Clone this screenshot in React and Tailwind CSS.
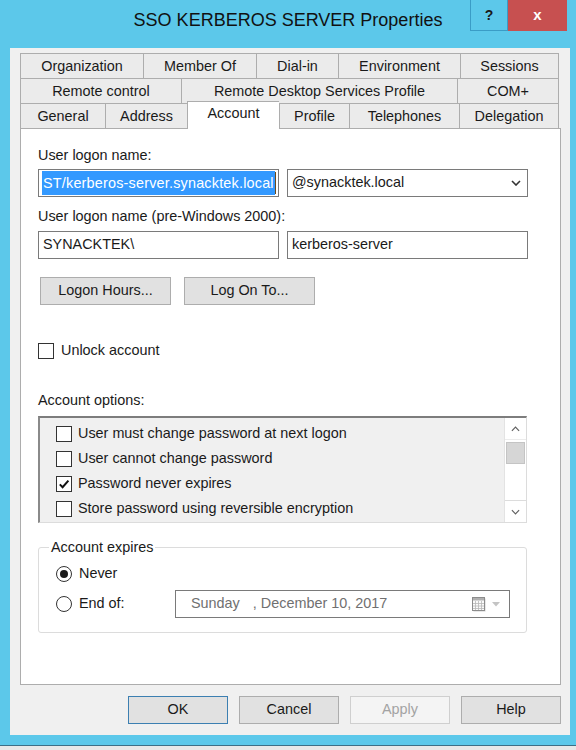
import React from 'react';

// Вкладки: [подпись, ширина, выбрана]
const tabRows = [
  [['Organization', 123], ['Member Of', 113], ['Dial-in', 82], ['Environment', 122], ['Sessions', 99]],
  [['Remote control', 161], ['Remote Desktop Services Profile', 276], ['COM+', 102]],
  [['General', 85], ['Address', 82], ['Account', 92, true], ['Profile', 70], ['Telephones', 110], ['Delegation', 100]],
];

const options = [
  ['User must change password at next logon', false],
  ['User cannot change password', false],
  ['Password never expires', true],
  ['Store password using reversible encryption', false],
];

const CheckBox = ({ checked }) => (
  <div className="w-4 h-4 shrink-0 border border-[#333333] bg-white flex items-center justify-center">
    {checked && (
      <svg width="12" height="12" viewBox="0 0 12 12">
        <path d="M1.8 6.4 L4.6 9.2 L10.4 2.6" fill="none" stroke="#111" strokeWidth="2" />
      </svg>
    )}
  </div>
);

const Radio = ({ checked }) => (
  <div className="w-4 h-4 shrink-0 rounded-full border border-[#333333] bg-white flex items-center justify-center">
    {checked && <div className="w-2 h-2 rounded-full bg-[#1a1a1a]" />}
  </div>
);

const Chevron = ({ up, color = '#333', width = 10, height = 6, sw = 1.6 }) => (
  <svg width={width} height={height} viewBox="0 0 10 6">
    <polyline
      points={up ? '1,5 5,1 9,5' : '1,1 5,5 9,1'}
      fill="none"
      stroke={color}
      strokeWidth={sw}
    />
  </svg>
);

const CalendarIcon = () => (
  <svg width="15" height="15" viewBox="0 0 15 15">
    <rect x="1.5" y="1.5" width="12" height="13" fill="#7a7a7a" opacity="0.35" />
    <rect x="0.5" y="0.5" width="12" height="13" fill="#fafafa" stroke="#8c8c8c" />
    <rect x="1" y="1" width="11" height="2.5" fill="#b0b0b0" />
    <path d="M1 6.5 H12 M1 9 H12 M1 11.5 H12 M3.5 4 V13 M6.5 4 V13 M9.5 4 V13" stroke="#b8b8b8" strokeWidth="0.8" />
  </svg>
);

const Tab = ({ label, width, selected, last }) => (
  <div
    style={{ width }}
    className={`flex items-center justify-center border-t border-l border-[#adadad] ${last ? 'border-r' : ''} ${
      selected ? 'relative z-10 -mt-[2px] -mb-px h-[28px] bg-white pb-[3px]' : 'h-[25px] bg-[#ebebeb] pt-[2px]'
    }`}
  >
    {label}
  </div>
);

const Button = ({ children, className = '' }) => (
  <div className={`h-[28px] flex items-center justify-center border ${className}`}>{children}</div>
);

export default function App() {
  return (
    <div className="w-[576px] h-[750px] bg-[#5cc8ea] flex flex-col font-['Liberation_Sans',Arial,sans-serif] text-[14.4px] text-[#1a1a1a] overflow-hidden">
      {/* заголовок окна */}
      <div className="h-[48px] grid grid-cols-[1fr_auto_1fr]">
        <div />
        <div className="pt-[8px] text-[18px] leading-[24px] text-[#111]">SSO KERBEROS SERVER Properties</div>
        <div className="flex justify-end items-start pr-[9px]">
          <div className="w-[38px] h-[31px] border border-t-0 border-[#3a9cc6] flex items-center justify-center text-[14px] font-bold text-[#1a1a1a]">
            ?
          </div>
          <div className="w-[59px] h-[31px] bg-[#c75050] flex items-center justify-center text-[15px] font-bold text-white">
            x
          </div>
        </div>
      </div>

      {/* тело диалога */}
      <div className="ml-[10px] w-[560px] h-[687px] bg-[#f0f0f0] flex flex-col pl-[10px] pr-[9px] pt-[5px]">
        {/* вкладки */}
        <div className="flex flex-col w-[539px]">
          {tabRows.map((row, i) => (
            <div key={i} className="flex items-start">
              {row.map(([label, width, selected], j) => (
                <Tab key={label} label={label} width={width} selected={selected} last={j === row.length - 1} />
              ))}
            </div>
          ))}
        </div>

        {/* панель вкладки Account */}
        <div className="w-[541px] h-[557px] bg-white border border-[#adadad] flex flex-col px-[17px] pt-[17px]">
          <div className="h-[18px] leading-[18px]">User logon name:</div>
          <div className="mt-[5px] flex gap-[8px]">
            <div className="w-[241px] h-[28px] border border-[#7a7a7a] bg-white flex items-center pl-[3px]">
              <div className="w-[233px] h-[24px] leading-[24px] bg-[#3399ff] text-white whitespace-nowrap overflow-hidden pl-[1px] tracking-[0.2px]">
                ST/kerberos-server.synacktek.local
              </div>
              <div className="w-px h-[22px] bg-[#6b4a1a]" />
            </div>
            <div className="w-[241px] h-[28px] border border-[#7a7a7a] bg-white flex items-center justify-between pl-[4px] pr-[6px]">
              <span>@synacktek.local</span>
              <Chevron />
            </div>
          </div>

          <div className="mt-[10px] h-[18px] leading-[18px]">User logon name (pre-Windows 2000):</div>
          <div className="mt-[6px] flex gap-[8px]">
            <div className="w-[241px] h-[28px] border border-[#7a7a7a] bg-white flex items-center pl-[4px]">SYNACKTEK\</div>
            <div className="w-[241px] h-[28px] border border-[#7a7a7a] bg-white flex items-center pl-[4px]">kerberos-server</div>
          </div>

          <div className="mt-[18px] pl-[2px] flex gap-[13px]">
            <Button className="w-[131px] bg-[#e1e1e1] border-[#adadad]">Logon Hours...</Button>
            <Button className="w-[131px] bg-[#e1e1e1] border-[#adadad]">Log On To...</Button>
          </div>

          <div className="mt-[37px] h-[18px] flex items-center gap-[7px]">
            <CheckBox />
            <span>Unlock account</span>
          </div>

          <div className="mt-[31px] h-[18px] leading-[18px]">Account options:</div>
          <div className="mt-[7px] w-[489px] h-[107px] bg-[#f0f0f0] border-t-2 border-l-2 border-r border-b border-t-[#7d7d7d] border-l-[#8a8a8a] border-r-[#dcdcdc] border-b-[#dcdcdc] flex">
            <div className="flex-1 flex flex-col pt-[3px] pl-[16px]">
              {options.map(([label, checked]) => (
                <div key={label} className="h-[25px] flex items-center gap-[6px]">
                  <CheckBox checked={checked} />
                  <span>{label}</span>
                </div>
              ))}
            </div>
            <div className="w-[22px] bg-white border-l border-[#e3e3e3] flex flex-col">
              <div className="h-[22px] flex items-center justify-center border-b border-[#ececec]">
                <Chevron up color="#606060" width={9} height={6} sw={1.3} />
              </div>
              <div className="mt-[2px] h-[22px] mx-[1px] bg-[#d6d6d6] border border-[#c4c4c4]" />
              <div className="flex-1" />
              <div className="h-[22px] flex items-center justify-center border-t border-[#dcdcdc]">
                <Chevron color="#606060" width={9} height={6} sw={1.3} />
              </div>
            </div>
          </div>

          <fieldset className="mt-[15px] w-[489px] border border-[#dcdcdc] rounded-[3px]">
            <legend className="ml-[10px] px-[2px] h-[18px] leading-[18px]">Account expires</legend>
            <div className="pl-[17px] pt-[9px] pb-[14px] flex flex-col">
              <div className="h-[18px] flex items-center gap-[7px]">
                <Radio checked />
                <span>Never</span>
              </div>
              <div className="mt-[7px] h-[28px] flex items-center">
                <div className="w-[119px] flex items-center gap-[7px]">
                  <Radio />
                  <span>End of:</span>
                </div>
                <div className="w-[335px] h-[28px] border border-[#7a7a7a] bg-white flex items-center pl-[15px] pr-[9px] text-[#707070]">
                  <span>Sunday</span>
                  <span className="ml-[13px]">, December 10, 2017</span>
                  <div className="ml-auto flex items-center gap-[5px]">
                    <CalendarIcon />
                    <svg width="8" height="5" viewBox="0 0 8 5">
                      <path d="M0 0 H8 L4 4.5 Z" fill="#c4c4c4" />
                    </svg>
                  </div>
                </div>
              </div>
            </div>
          </fieldset>
        </div>

        {/* кнопки диалога */}
        <div className="mt-[11px] flex justify-end gap-[11px]">
          <Button className="w-[100px] bg-[#e1e1e1] border-[#3c7fb1]">OK</Button>
          <Button className="w-[100px] bg-[#e1e1e1] border-[#adadad]">Cancel</Button>
          <Button className="w-[100px] bg-[#f4f4f4] border-[#cfcfcf] text-[#a3a3a3]">Apply</Button>
          <Button className="w-[100px] bg-[#e1e1e1] border-[#adadad]">Help</Button>
        </div>
      </div>

      <div className="flex-1 border-b border-[#3d6f86]" />
      <div className="h-[4px] bg-[#e8e8e8]" />
    </div>
  );
}
